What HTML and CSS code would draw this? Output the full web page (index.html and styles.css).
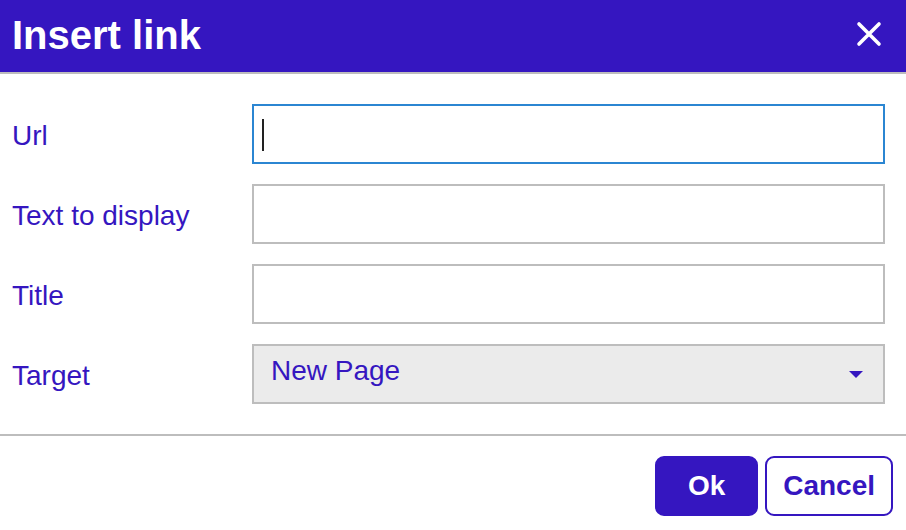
FILE: index.html
```html
<!DOCTYPE html>
<html lang="en">
<head>
<meta charset="utf-8">
<title>Insert link</title>
<link rel="stylesheet" href="styles.css">
</head>
<body>
<div class="dialog">
  <header class="dialog-header">
    <h1 class="dialog-title">Insert link</h1>
    <button class="close-btn" aria-label="Close">
      <svg width="26" height="26" viewBox="0 0 26 26"><path d="M3 3 L23 23 M23 3 L3 23" stroke="#fff" stroke-width="3.6" stroke-linecap="round"/></svg>
    </button>
  </header>
  <div class="dialog-body">
    <div class="form-row">
      <label class="form-label">Url</label>
      <div class="field field-focus"><span class="caret"></span></div>
    </div>
    <div class="form-row">
      <label class="form-label">Text to display</label>
      <div class="field"></div>
    </div>
    <div class="form-row">
      <label class="form-label">Title</label>
      <div class="field"></div>
    </div>
    <div class="form-row">
      <label class="form-label">Target</label>
      <div class="field field-select">
        <span class="select-value">New Page</span>
        <span class="select-arrow"></span>
      </div>
    </div>
  </div>
  <footer class="dialog-footer">
    <button class="btn btn-primary">Ok</button>
    <button class="btn btn-secondary">Cancel</button>
  </footer>
</div>
</body>
</html>
```
FILE: styles.css
```css
* { box-sizing: border-box; }
html, body { margin: 0; padding: 0; background: #fff; }
body {
  font-family: "Liberation Sans", Arial, sans-serif;
  width: 906px;
  height: 530px;
  overflow: hidden;
}
.dialog { display: flex; flex-direction: column; }
.dialog-header {
  height: 74px;
  background: #3516c0;
  border-bottom: 2px solid #bdbdbd;
  display: flex;
  align-items: center;
  justify-content: space-between;
  padding: 0 24px 0 12px;
}
.dialog-title {
  margin: 0;
  color: #fff;
  font-size: 40px;
  font-weight: bold;
  line-height: 72px;
  margin-top: -3px;
}
.close-btn {
  background: none;
  border: 0;
  padding: 0;
  width: 26px;
  height: 26px;
  display: block;
  margin-top: -4px;
}
.close-btn svg { display: block; }
.dialog-body {
  padding: 30px 21px 30px 12px;
  display: flex;
  flex-direction: column;
  gap: 20px;
  border-bottom: 2px solid #bdbdbd;
}
.form-row {
  display: flex;
  align-items: center;
  height: 60px;
}
.form-label {
  width: 240px;
  flex: none;
  font-size: 28px;
  color: #3516c0;
  padding-top: 4px;
}
.field {
  flex: 1;
  height: 60px;
  border: 2px solid #bdbdbd;
  background: #fff;
  position: relative;
}
.field-focus { border-color: #2b86d2; }
.caret {
  position: absolute;
  left: 8px;
  top: 13px;
  width: 2px;
  height: 32px;
  background: #222;
}
.field-select {
  background: #ebebeb;
  display: flex;
  align-items: center;
  justify-content: space-between;
  padding: 0 20px 6px 17px;
}
.select-value {
  font-size: 28px;
  color: #3516c0;
}
.select-arrow {
  width: 0;
  height: 0;
  border-left: 7px solid transparent;
  border-right: 7px solid transparent;
  border-top: 7px solid #3516c0;
  margin-top: 6px;
}
.dialog-footer {
  display: flex;
  justify-content: flex-end;
  gap: 7px;
  padding: 20px 13px 0 0;
}
.btn {
  height: 60px;
  font-family: "Liberation Sans", Arial, sans-serif;
  font-size: 28px;
  font-weight: bold;
  border-radius: 9px;
  border: 2px solid #3516c0;
  padding: 0 16px;
}
.btn-primary {
  background: #3516c0;
  color: #fff;
  width: 103px;
}
.btn-secondary {
  background: #fff;
  color: #3516c0;
}
```
